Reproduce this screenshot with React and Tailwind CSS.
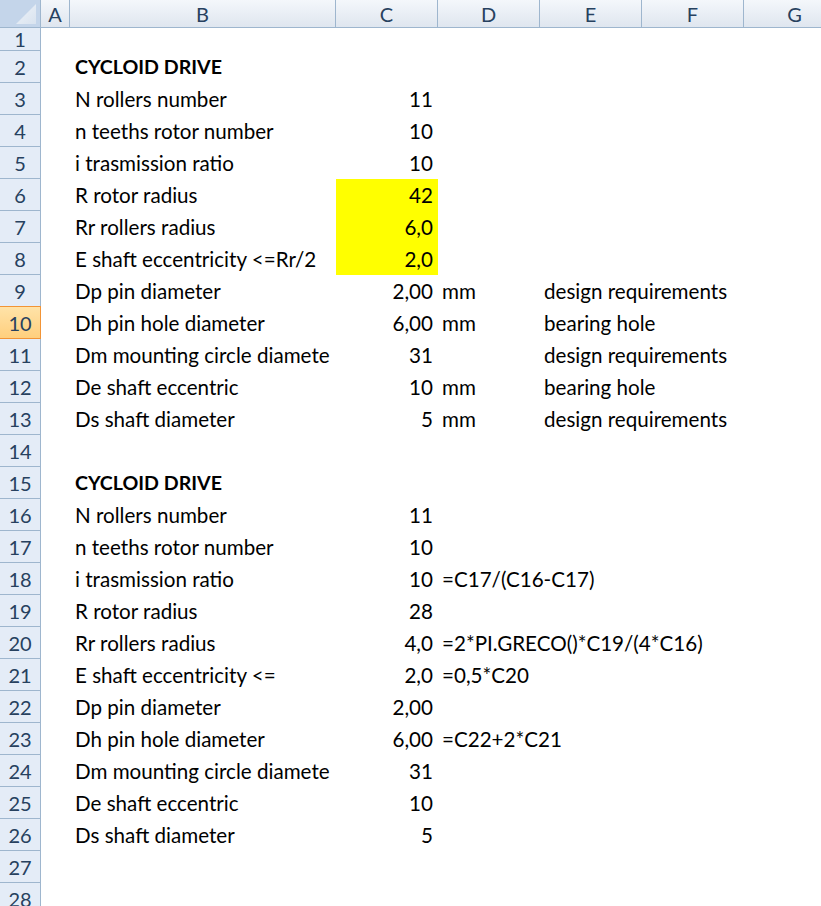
import React from 'react';

const cols = ['A', 'B', 'C', 'D', 'E', 'F', 'G'];
const colW = ['w-[29px]', 'w-[266px]', 'w-[102px]', 'w-[102px]', 'w-[102px]', 'w-[102px]', 'w-[102px]'];

const rows = {
  2: { b: 'CYCLOID DRIVE', bold: true },
  3: { b: 'N rollers number', c: '11' },
  4: { b: 'n teeths rotor number', c: '10' },
  5: { b: 'i trasmission ratio', c: '10' },
  6: { b: 'R rotor radius', c: '42', yellow: true },
  7: { b: 'Rr rollers radius', c: '6,0', yellow: true },
  8: { b: 'E shaft eccentricity <=Rr/2', c: '2,0', yellow: true },
  9: { b: 'Dp pin diameter', c: '2,00', d: 'mm', e: 'design requirements' },
  10: { b: 'Dh pin hole diameter', c: '6,00', d: 'mm', e: 'bearing hole' },
  11: { b: 'Dm mounting circle diamete', c: '31', e: 'design requirements' },
  12: { b: 'De shaft eccentric', c: '10', d: 'mm', e: 'bearing hole' },
  13: { b: 'Ds shaft diameter', c: '5', d: 'mm', e: 'design requirements' },
  15: { b: 'CYCLOID DRIVE', bold: true },
  16: { b: 'N rollers number', c: '11' },
  17: { b: 'n teeths rotor number', c: '10' },
  18: { b: 'i trasmission ratio', c: '10', d: '=C17/(C16-C17)' },
  19: { b: 'R rotor radius', c: '28' },
  20: { b: 'Rr rollers radius', c: '4,0', d: '=2*PI.GRECO()*C19/(4*C16)' },
  21: { b: 'E shaft eccentricity <=', c: '2,0', d: '=0,5*C20' },
  22: { b: 'Dp pin diameter', c: '2,00' },
  23: { b: 'Dh pin hole diameter', c: '6,00', d: '=C22+2*C21' },
  24: { b: 'Dm mounting circle diamete', c: '31' },
  25: { b: 'De shaft eccentric', c: '10' },
  26: { b: 'Ds shaft diameter', c: '5' },
};

const RowHeader = ({ n, selected }) => (
  <div
    className={`w-[41px] shrink-0 flex items-center justify-center border-r border-b text-[20px] ${
      selected
        ? 'bg-gradient-to-b from-[#ffe3a8] to-[#ffcf7d] border-[#f29436] border-t -mt-px'
        : 'bg-[#e4ecf7] border-[#9eb6ce]'
    } text-[#27415f]`}
  >
    {n}
  </div>
);

const App = () => {
  const numbers = Array.from({ length: 28 }, (_, i) => i + 1);

  return (
    <div
      className="w-[821px] h-[906px] overflow-hidden bg-white text-black text-[20.6px] leading-none"
      style={{ fontFamily: 'Lato, "Open Sans", sans-serif' }}
    >
      {/* intestazioni colonne */}
      <div className="flex h-[28px] w-[846px]">
        <div className="w-[41px] shrink-0 bg-[#c4d5ea] border-r border-b border-[#9eb6ce] flex items-end justify-end pr-[4px] pb-[3px]">
          <svg width="20" height="20" viewBox="0 0 20 20">
            <defs>
              <linearGradient id="tri" x1="0" y1="0" x2="1" y2="1">
                <stop offset="0" stopColor="#eef3f9" />
                <stop offset="1" stopColor="#d9e3ef" />
              </linearGradient>
            </defs>
            <polygon points="20,0 20,20 0,20" fill="url(#tri)" />
          </svg>
        </div>
        {cols.map((c, i) => (
          <div
            key={c}
            className={`${colW[i]} shrink-0 flex items-center justify-center bg-gradient-to-b from-[#f4f7fb] to-[#dfe6ef] border-r border-b border-[#9eb6ce] text-[#27415f] text-[20px]`}
          >
            {c}
          </div>
        ))}
      </div>

      {numbers.map((n) => {
        const r = rows[n] || {};
        return (
          <div key={n} className={`flex w-[846px] ${n === 1 ? 'h-[23px]' : 'h-[32px]'}`}>
            <RowHeader n={n} selected={n === 10} />
            <div className="w-[29px] shrink-0" />
            <div
              className={`w-[266px] shrink-0 flex items-center pl-[5px] overflow-hidden whitespace-nowrap ${
                r.bold ? 'font-bold text-[19.6px]' : ''
              }`}
            >
              {r.b}
            </div>
            <div
              className={`w-[102px] shrink-0 flex items-center justify-end pr-[5px] ${
                r.yellow ? 'bg-[#ffff00]' : ''
              }`}
            >
              {r.c}
            </div>
            <div className="w-[102px] shrink-0 flex items-center pl-[4px] whitespace-nowrap overflow-visible">
              {r.d}
            </div>
            <div className="w-[306px] shrink-0 flex items-center pl-[4px] whitespace-nowrap">
              {r.e}
            </div>
          </div>
        );
      })}
    </div>
  );
};

export default App;
